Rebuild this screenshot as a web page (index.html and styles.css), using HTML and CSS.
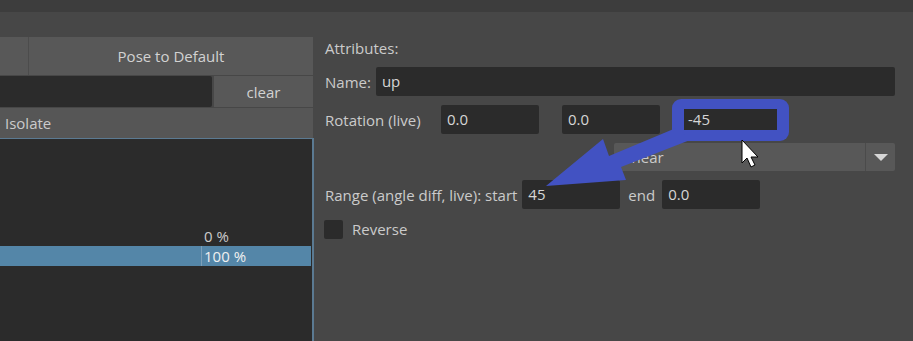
FILE: index.html
```html
<!DOCTYPE html>
<html lang="en">
<head>
  <meta charset="UTF-8">
  <meta name="viewport" content="width=device-width, initial-scale=1.0">
  <title>Pose Reader</title>
  <link rel="stylesheet" href="styles.css">
</head>
<body>
  <div class="topbar"></div>

  <div class="main">
    <div class="left">
      <div class="pose-row">
        <button class="btn btn-stub"></button>
        <button class="btn btn-pose">Pose to Default</button>
      </div>
      <div class="filter-row">
        <div class="filter-input"></div>
        <button class="btn btn-clear">clear</button>
      </div>
      <div class="list-header">Isolate</div>
      <div class="list">
        <div class="list-row">
          <span class="cell-name"></span>
          <span class="cell-value">0 %</span>
        </div>
        <div class="list-row selected">
          <span class="cell-name"></span>
          <span class="cell-value">100 %</span>
        </div>
      </div>
    </div>

    <div class="right">
      <div class="title">Attributes:</div>

      <div class="field-row">
        <span class="label">Name:</span>
        <div class="input wide">up</div>
      </div>

      <div class="field-row">
        <span class="label label-rotation">Rotation (live)</span>
        <div class="input">0.0</div>
        <div class="input">0.0</div>
        <div class="callout">
          <div class="input small">-45</div>
        </div>
      </div>

      <div class="field-row end">
        <div class="dropdown">
          <span class="dropdown-text">Linear</span>
          <span class="dropdown-btn"><span class="triangle"></span></span>
        </div>
      </div>

      <div class="field-row">
        <span class="label">Range (angle diff, live): start</span>
        <div class="input">45</div>
        <span class="label label-end">end</span>
        <div class="input">0.0</div>
      </div>

      <div class="field-row check-row">
        <span class="checkbox"></span>
        <span class="label">Reverse</span>
      </div>
    </div>
  </div>

  <svg class="overlay" width="913" height="341" viewBox="0 0 913 341">
    <polygon points="546,186 603,139 609,156 676,128 690,140 621,167 626,180" fill="#4252c2"/>
    <path d="M742 140 L742 163 L747 158 L751 167 L755 165 L751 157 L758 157 Z" fill="#fff" stroke="#000" stroke-width="1" stroke-linejoin="round"/>
  </svg>
</body>
</html>
```

FILE: styles.css
```css
* {
  margin: 0;
  padding: 0;
  box-sizing: border-box;
}

body {
  width: 913px;
  height: 341px;
  overflow: hidden;
  font-family: "Open Sans", "Noto Sans", sans-serif;
  font-size: 15px;
  color: #cbcbcb;
  background-color: #474747;
  position: relative;
}

.topbar {
  height: 12px;
  background-color: #3d3d3d;
}

.main {
  display: flex;
  height: 329px;
}

/* left panel */

.left {
  width: 313px;
  margin-top: 25px;
  display: flex;
  flex-direction: column;
}

.btn {
  font-family: inherit;
  font-size: 15px;
  color: #d2d2d2;
  background-color: #585858;
  border: none;
}

.pose-row {
  display: flex;
  height: 38px;
  gap: 1px;
  background-color: #4c4c4c;
}

.btn-stub {
  width: 28px;
}

.btn-pose {
  flex: 1;
}

.filter-row {
  display: flex;
  height: 31px;
  margin-top: 1px;
  gap: 2px;
}

.filter-input {
  width: 212px;
  background-color: #2b2b2b;
  border-radius: 0 2px 2px 0;
}

.btn-clear {
  flex: 1;
}

.list-header {
  height: 30px;
  margin-top: 1px;
  padding-left: 5px;
  line-height: 30px;
  background-color: #565656;
}

.list {
  flex: 1;
  background-color: #2b2b2b;
  border-top: 1px solid #5b7a92;
  border-right: 2px solid #5b7a92;
  margin-right: -1px;
  padding-top: 87px;
  padding-right: 1px;
}

.list-row {
  display: flex;
  height: 20px;
  line-height: 20px;
}

.cell-name {
  width: 202px;
}

.cell-value {
  padding-left: 2px;
}

.list-row.selected {
  background-color: #5486a8;
  color: #f0f0f0;
}

.list-row.selected .cell-name {
  border-right: 1px solid #7d9fb8;
}

/* right panel */

.right {
  flex: 1;
  margin-left: 3px;
  padding: 26px 18px 0 9px;
  display: flex;
  flex-direction: column;
  gap: 9px;
}

.title {
  line-height: 20px;
}

.field-row {
  display: flex;
  align-items: center;
  height: 29px;
}

.field-row.end {
  justify-content: flex-end;
  height: 28px;
}

.label {
  white-space: nowrap;
}

.label-rotation {
  width: 116px;
}

.label-end {
  margin: 0 2px 0 8px;
}

.input {
  width: 98px;
  height: 29px;
  line-height: 29px;
  padding-left: 6px;
  margin-left: 5px;
  background-color: #2b2b2b;
  border-radius: 2px;
  color: #d6d6d6;
}

.label-rotation + .input {
  margin-left: 0;
}

.input + .input {
  margin-left: 23px;
}

.input.wide {
  flex: 1;
}

.callout {
  margin: -6px 0 -7px 12px;
  padding: 10px 12px 11px;
  background-color: #4252c2;
  border-radius: 9px;
}

.input.small {
  width: 93px;
  height: 21px;
  line-height: 21px;
  margin: 0;
  padding-left: 4px;
  border-radius: 0;
}

.dropdown {
  display: flex;
  width: 281px;
  height: 28px;
  background-color: #585858;
  border-radius: 2px;
}

.dropdown-text {
  flex: 1;
  padding-left: 6px;
  line-height: 28px;
}

.dropdown-btn {
  width: 30px;
  border-left: 1px solid #4b4b4b;
  display: flex;
  align-items: center;
  justify-content: center;
}

.triangle {
  width: 0;
  height: 0;
  border-left: 7px solid transparent;
  border-right: 7px solid transparent;
  border-top: 7px solid #d6d6d6;
}

.check-row {
  height: 20px;
  margin-top: 1px;
}

.checkbox {
  width: 19px;
  height: 19px;
  margin-left: -1px;
  margin-right: 9px;
  background-color: #2b2b2b;
  border-radius: 2px;
}

.overlay {
  position: absolute;
  left: 0;
  top: 0;
  pointer-events: none;
}
```
